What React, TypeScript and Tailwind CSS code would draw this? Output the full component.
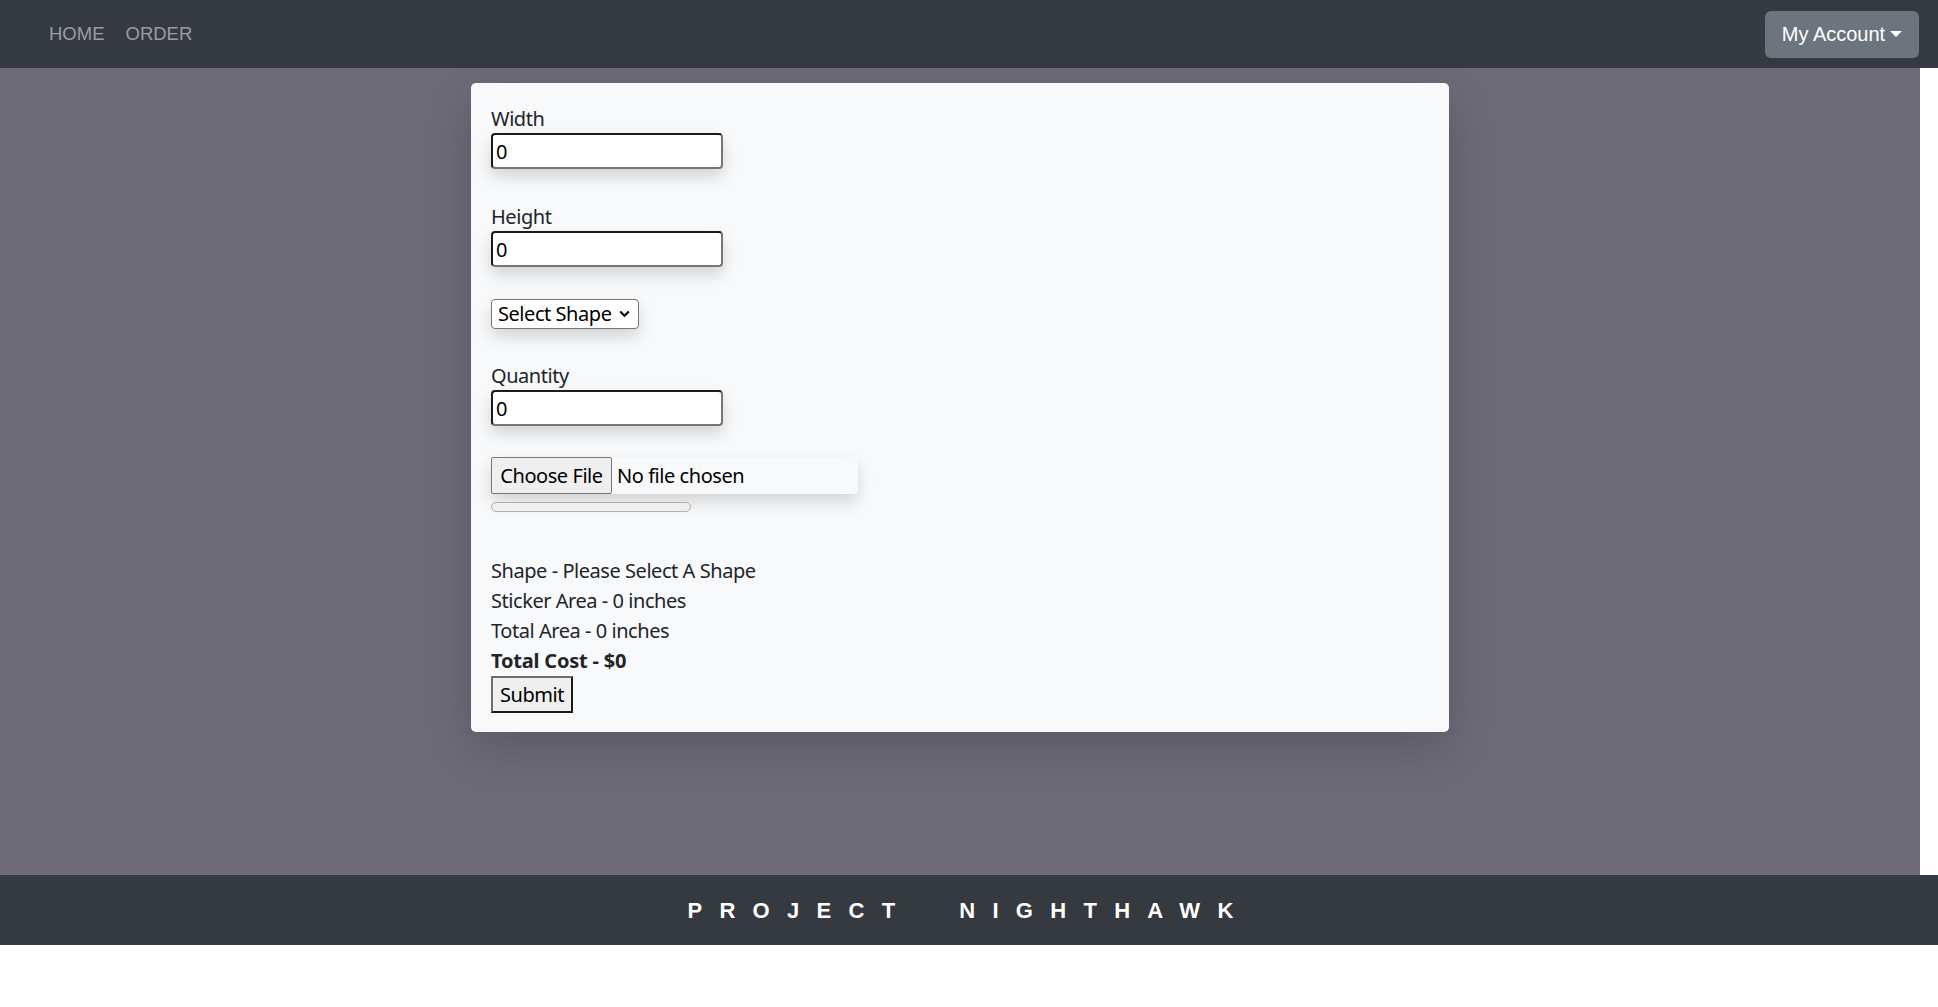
import React from "react";

const body = { fontFamily: '"Noto Sans", "Open Sans", sans-serif', letterSpacing: "-0.45px" } as React.CSSProperties;
const arial = { fontFamily: '"Liberation Sans", Arial, sans-serif' } as React.CSSProperties;

function Field({ label }: { label: string }) {
  return (
    <div className="flex flex-col items-start">
      <label className="text-[20px] leading-[30px] text-[#212529] pt-[1px] -mb-[1px]">{label}</label>
      <input
        type="text"
        defaultValue="0"
        className="w-[232px] h-[36px] bg-white border-2 border-t-[#1b1b1b] border-l-[#1b1b1b] border-b-[#767676] border-r-[#767676] rounded-[4px] pl-[3px] text-[20px] text-black shadow-[0_8px_16px_rgba(0,0,0,0.15)] outline-none"
        style={body}
      />
    </div>
  );
}

export default function App() {
  return (
    <div className="w-[1938px] min-h-[1007px] bg-white">
      <nav
        className="h-[68px] bg-[#343a40] flex items-center justify-between pl-[49px] pr-[19px]"
        style={arial}
      >
        <div className="flex items-center gap-[21px] text-[18.5px] text-[#9a9da0]">
          <span>HOME</span>
          <span>ORDER</span>
        </div>
        <button className="h-[47px] w-[154px] bg-[#6c757d] rounded-[6px] text-white text-[20px] flex items-center justify-center gap-[5px]">
          <span>My Account</span>
          <svg width="12" height="7" viewBox="0 0 12 7" className="mt-[1px]">
            <path d="M0 0 L12 0 L6 6 Z" fill="white" />
          </svg>
        </button>
      </nav>

      <main className="w-[1920px] h-[807px] bg-[#6e6b78] pt-[15px]">
        <div
          className="mx-auto w-[978px] bg-[#f8f9fa] rounded-[5px] p-[20px] shadow-[0_16px_48px_rgba(0,0,0,0.18)] text-[#212529]"
          style={body}
        >
          <Field label="Width" />
          <div className="h-[32px]" />
          <Field label="Height" />
          <div className="h-[32px]" />
          <div className="relative w-[148px] h-[30px] bg-white border border-[#767676] rounded-[4px] shadow-[0_8px_16px_rgba(0,0,0,0.15)] flex items-center pl-[6px] text-[20px] text-black">
            <span className="leading-none">Select Shape</span>
            <svg
              className="absolute right-[8px] top-[10px]"
              width="11"
              height="8"
              viewBox="0 0 11 8"
            >
              <path d="M1.2 1.5 L5.5 5.8 L9.8 1.5" stroke="black" strokeWidth="2" fill="none" />
            </svg>
          </div>
          <div className="h-[31px]" />
          <Field label="Quantity" />
          <div className="h-[31px]" />
          <div className="w-[367px] h-[37px] rounded-[4px] bg-[#f8f9fa] shadow-[0_8px_16px_rgba(0,0,0,0.15)] flex items-center">
            <div className="h-[37px] w-[121px] bg-[#efefef] border border-[#767676] rounded-[2px] flex items-center justify-center text-[20px] text-black">
              Choose File
            </div>
            <span className="ml-[5px] text-[20px] text-black">No file chosen</span>
          </div>
          <div className="mt-[8px] w-[200px] h-[10px] rounded-full border border-[#b0b0b0] bg-[#efefef]" />
          <div className="h-[44px]" />
          <div className="text-[20px] leading-[30px]">
            <div>Shape - Please Select A Shape</div>
            <div>Sticker Area - 0 inches</div>
            <div>Total Area - 0 inches</div>
            <div className="font-bold tracking-[-0.2px]">Total Cost - $0</div>
          </div>
          <button className="h-[37px] w-[82px] bg-[#efefef] border-2 border-t-[#6d6d6d] border-l-[#6d6d6d] border-b-[#1a1a1a] border-r-[#1a1a1a] text-[20px] text-black flex items-center justify-center -mb-[1px]">
            Submit
          </button>
        </div>
      </main>

      <footer
        className="h-[70px] bg-[#343a40] flex items-center justify-center text-white font-bold text-[22px] tracking-[17.3px] whitespace-pre"
        style={arial}
      >
        {"PROJECT  NIGHTHAWK"}
      </footer>
    </div>
  );
}
